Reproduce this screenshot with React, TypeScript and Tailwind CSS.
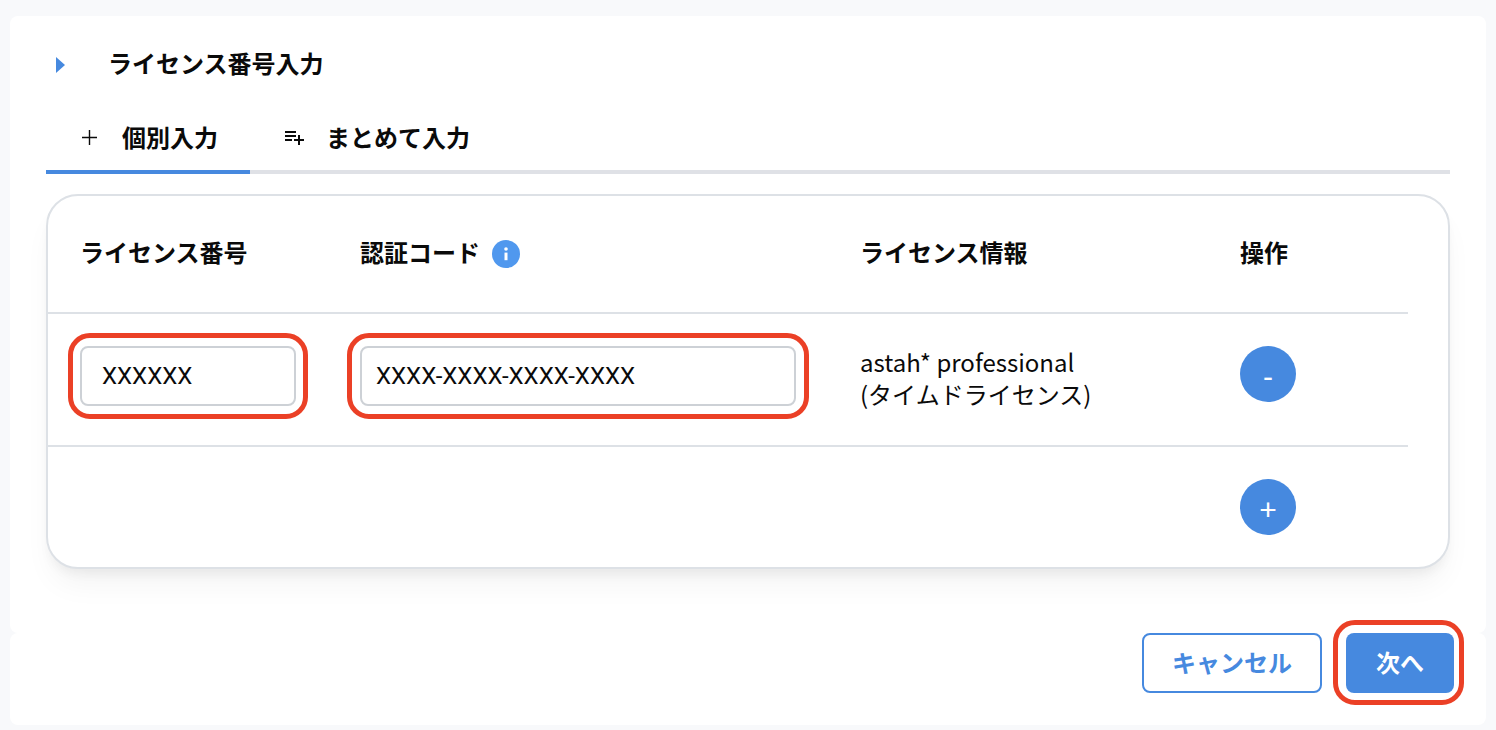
import { useState } from 'react'
import { MdPlaylistAdd } from 'react-icons/md'

const focusRing = 'pointer-events-none absolute border-[5px] border-[#eb4026] rounded-[22px]'
const roundButton = "flex h-14 w-14 items-center justify-center rounded-full bg-[#4689df] pt-1.5 font-['Liberation_Sans',sans-serif] text-3xl text-white"
const headCell = 'border-b-2 border-[#dde1e6] px-8 pb-1 font-bold'
const bodyCell = 'border-b-2 border-[#dde1e6] px-8 pt-8 align-top'

function PlusIcon() {
  return (
    <svg className="h-6 w-6" viewBox="0 0 24 24" fill="none" stroke="currentColor" strokeWidth="1.4" aria-hidden="true">
      <path d="M4 12.5h15M11.5 5v15" />
    </svg>
  )
}

function InfoIcon() {
  return (
    <svg className="h-7 w-7" viewBox="0 0 28 28" aria-hidden="true">
      <circle cx="14" cy="14" r="14" fill="#5098ee" />
      <circle cx="14" cy="9" r="1.8" fill="#fff" />
      <path d="M12.5 12.6h3v7.6h-3z" fill="#fff" />
    </svg>
  )
}

function LicenseTable() {
  const [licenseNo, setLicenseNo] = useState('XXXXXX')
  const [authCode, setAuthCode] = useState('XXXX-XXXX-XXXX-XXXX')

  return (
    <div className="mt-5 rounded-[32px] border-2 border-[#dde1e6] bg-white pr-10 shadow-[0_20px_30px_-6px_rgba(0,0,0,0.05),0_8px_12px_-4px_rgba(0,0,0,0.06)]">
      <table className="w-full table-fixed border-separate border-spacing-0 text-left">
        <thead>
          <tr className="h-[118px]">
            <th className={`${headCell} w-[280px]`}>ライセンス番号</th>
            <th className={`${headCell} w-[500px]`}>
              <div className="flex items-center gap-3">
                認証コード
                <button type="button" aria-label="認証コードについて" className="pt-1">
                  <InfoIcon />
                </button>
              </div>
            </th>
            <th className={`${headCell} w-[380px]`}>ライセンス情報</th>
            <th className={headCell}>操作</th>
          </tr>
        </thead>
        <tbody>
          <tr className="h-[133px]">
            <td className={bodyCell}>
              <div className="relative">
                <input
                  type="text"
                  aria-label="ライセンス番号"
                  value={licenseNo}
                  onChange={(e) => setLicenseNo(e.target.value)}
                  className="block h-[60px] w-full rounded-lg border-2 border-[#cdd1d6] px-5 font-['Roboto',sans-serif]"
                />
                <span className={`${focusRing} -inset-x-3 -inset-y-[13px]`} />
              </div>
            </td>
            <td className={bodyCell}>
              <div className="relative">
                <input
                  type="text"
                  aria-label="認証コード"
                  value={authCode}
                  onChange={(e) => setAuthCode(e.target.value)}
                  className="block h-[60px] w-full rounded-lg border-2 border-[#cdd1d6] px-3.5 font-['Roboto',sans-serif]"
                />
                <span className={`${focusRing} -inset-[13px]`} />
              </div>
            </td>
            <td className={`${bodyCell} leading-8`}>
              astah* professional
              <br />
              (タイムドライセンス)
            </td>
            <td className={bodyCell}>
              <button type="button" className={roundButton}>-</button>
            </td>
          </tr>
          <tr className="h-[120px]">
            <td colSpan={3} />
            <td className="px-8 pt-8 align-top">
              <button type="button" className={roundButton}>+</button>
            </td>
          </tr>
        </tbody>
      </table>
    </div>
  )
}

export default function App() {
  return (
    <div className="min-h-screen bg-[#f8f9fb] px-2.5 pt-4 font-['Noto_Sans_CJK_JP',sans-serif] text-2xl leading-8 text-[#0a0a0a]">
      <section className="rounded-lg bg-white px-9 pt-[31px] pb-16">
        <h2 className="flex items-center font-bold">
          <svg className="mr-8 ml-1.5 h-6 w-6" viewBox="0 0 24 24" aria-hidden="true">
            <path d="M4 5v16l9-8z" fill="#4689df" />
          </svg>
          <span className="pb-0.5">ライセンス番号入力</span>
        </h2>

        <div className="mt-[23px] flex">
          <button type="button" className="flex h-[70px] items-center gap-5 border-b-4 border-[#4689df] px-8 font-bold">
            <PlusIcon />
            個別入力
          </button>
          <button type="button" className="flex h-[70px] flex-1 items-center gap-5 border-b-4 border-[#dfe1e6] px-8 font-bold">
            <MdPlaylistAdd className="h-6 w-6" />
            まとめて入力
          </button>
        </div>

        <LicenseTable />
      </section>

      <footer className="flex justify-end gap-6 rounded-lg bg-white pr-8 pb-8">
        <button type="button" className="h-[60px] rounded-lg border-2 border-[#4689df] px-7 pb-0.5 font-bold text-[#4689df]">
          キャンセル
        </button>
        <div className="relative">
          <button type="button" className="h-[60px] rounded-lg bg-[#4689df] px-[30px] pb-0.5 font-bold text-white">
            次へ
          </button>
          <span className={`${focusRing} -top-[13px] -right-2.5 -bottom-3 -left-[13px]`} />
        </div>
      </footer>
    </div>
  )
}
